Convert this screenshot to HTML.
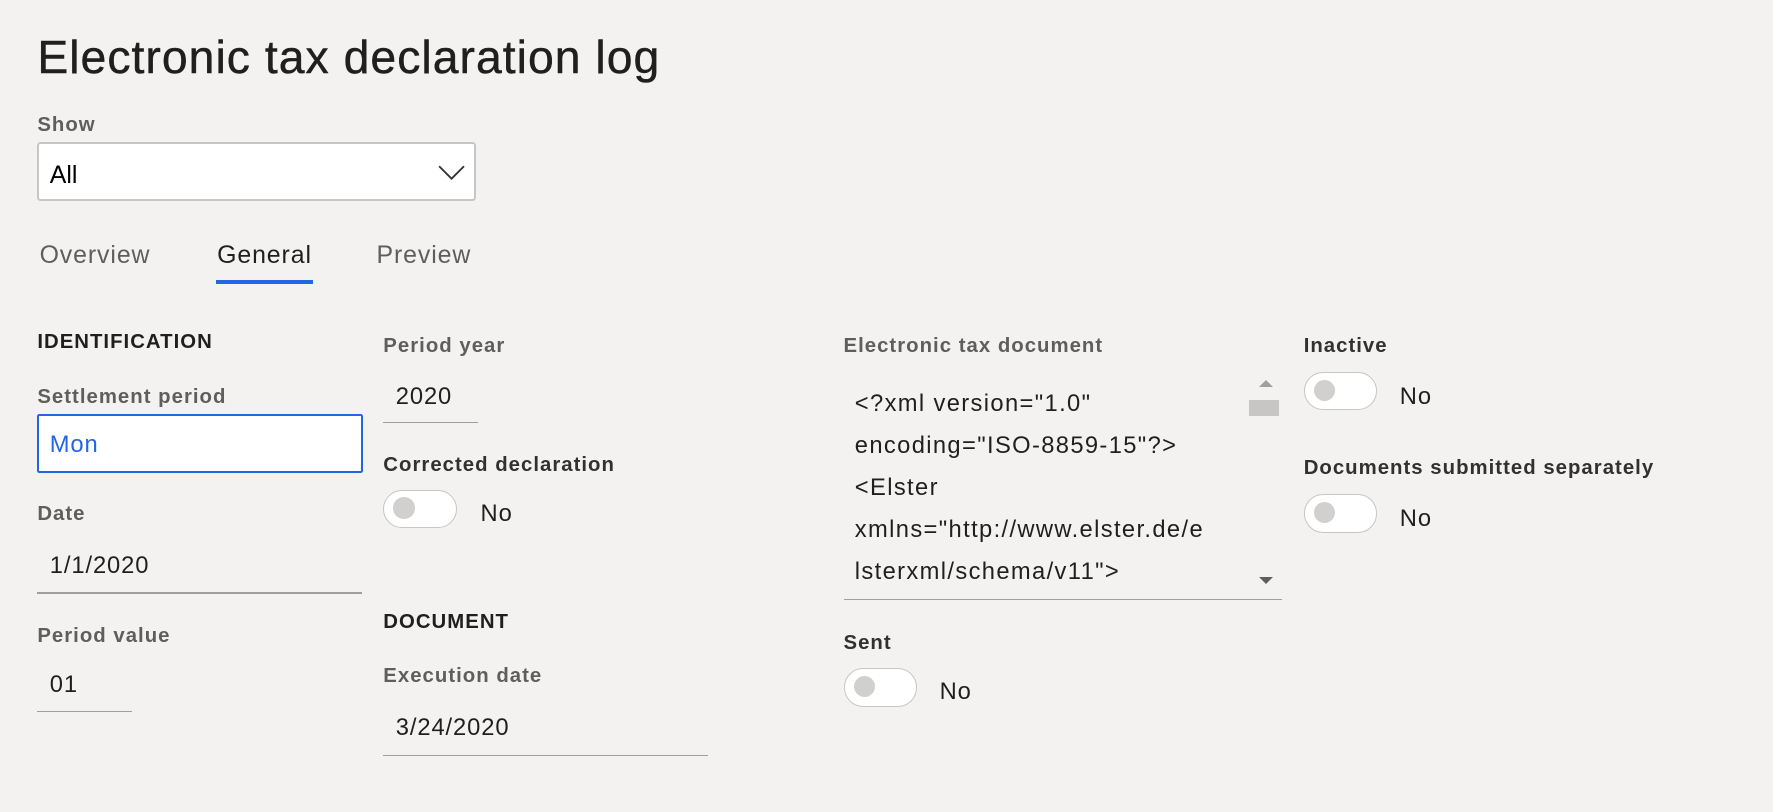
<!DOCTYPE html>
<html><head><meta charset="utf-8"><style>
html,body{margin:0;padding:0;background:#f3f2f1;overflow:hidden;}
body{width:1773px;height:812px;}
#w{position:relative;width:1568px;height:718px;zoom:1.1307;font-family:"Liberation Sans",sans-serif;}
.t{position:absolute;white-space:nowrap;line-height:1;}
.lbl{font-size:18px;font-weight:bold;color:#605e5c;letter-spacing:0.9px;margin-top:2px;}
.dk{color:#323130;}
.val{font-size:21px;color:#201f1e;letter-spacing:0.8px;}
.ul{position:absolute;height:1px;background:#a19f9d;}
.tg{position:absolute;width:62px;height:32px;border:1.5px solid #c8c6c4;border-radius:17px;background:#fff;box-sizing:border-box;}
.tg:after{content:"";position:absolute;left:8px;top:6px;width:19px;height:19px;border-radius:50%;background:#d2d0ce;}
</style></head><body><div id="w">
<div class="t" style="left:33px;top:30px;font-size:41px;color:#201f1e;letter-spacing:0.9px;-webkit-text-stroke:0.4px #201f1e;">Electronic tax declaration log</div>
<div class="t lbl" style="left:33px;top:100px;">Show</div>
<div style="position:absolute;left:33px;top:126px;width:388px;height:52px;border:2px solid #c8c6c4;border-radius:3px;background:#fff;box-sizing:border-box;"></div>
<div class="t" style="left:44px;top:144px;font-size:22px;color:#000;">All</div>
<svg style="position:absolute;left:387px;top:145px" width="24" height="16"><path d="M1 2 L12 13 L23 2" fill="none" stroke="#323130" stroke-width="1.6"/></svg>
<div class="t" style="left:35px;top:215px;font-size:22px;color:#605e5c;letter-spacing:0.8px;">Overview</div>
<div class="t" style="left:192px;top:215px;font-size:22px;color:#201f1e;letter-spacing:0.8px;">General</div>
<div class="t" style="left:333px;top:215px;font-size:22px;color:#605e5c;letter-spacing:0.8px;">Preview</div>
<div style="position:absolute;left:191px;top:248px;width:86px;height:3px;background:#2266e3;"></div>

<div class="t" style="left:33px;top:294px;font-size:18px;font-weight:bold;color:#201f1e;letter-spacing:0.9px;">IDENTIFICATION</div>
<div class="t lbl" style="left:33px;top:340px;">Settlement period</div>
<div style="position:absolute;left:33px;top:366px;width:288px;height:52px;border:2px solid #2266e3;border-radius:2px;background:#fff;box-sizing:border-box;"></div>
<div class="t" style="left:44px;top:384px;font-size:21px;color:#2266e3;letter-spacing:0.8px;">Mon</div>
<div class="t lbl" style="left:33px;top:444px;">Date</div>
<div class="t val" style="left:44px;top:491px;">1/1/2020</div>
<div class="ul" style="left:33px;top:524px;width:287px;"></div>
<div class="t lbl" style="left:33px;top:552px;">Period value</div>
<div class="t val" style="left:44px;top:596px;">01</div>
<div class="ul" style="left:33px;top:629px;width:84px;"></div>

<div class="t lbl" style="left:339px;top:295px;">Period year</div>
<div class="t val" style="left:350px;top:341px;">2020</div>
<div class="ul" style="left:339px;top:373px;width:84px;"></div>
<div class="t lbl dk" style="left:339px;top:400px;">Corrected declaration</div>
<div class="tg" style="left:339px;top:433px;width:65px;height:34px;"></div>
<div class="t val" style="left:425px;top:445px;">No</div>
<div class="t" style="left:339px;top:541px;font-size:18px;font-weight:bold;color:#201f1e;letter-spacing:0.9px;">DOCUMENT</div>
<div class="t lbl" style="left:339px;top:587px;">Execution date</div>
<div class="t val" style="left:350px;top:634px;">3/24/2020</div>
<div class="ul" style="left:339px;top:668px;width:287px;"></div>

<div class="t lbl" style="left:746px;top:295px;">Electronic tax document</div>
<div style="position:absolute;left:746px;top:330px;width:388px;height:200px;border-bottom:1.5px solid #a19f9d;overflow:hidden;">
<div style="position:absolute;left:10px;top:10px;font-size:21px;line-height:37px;color:#201f1e;white-space:nowrap;letter-spacing:1.2px;">&lt;?xml version="1.0"<br>encoding="ISO-8859-15"?&gt;<br>&lt;Elster<br>xmlns="http://www.elster.de/e<br>lsterxml/schema/v11"&gt;<br>&lt;TransferHeader</div>
<div style="position:absolute;right:0;top:0;width:30px;height:200px;background:#f3f2f1;"></div>
<div style="position:absolute;right:8px;top:6px;width:0;height:0;border-left:7px solid transparent;border-right:7px solid transparent;border-bottom:7px solid #a19f9d;"></div>
<div style="position:absolute;right:3px;top:24px;width:26px;height:14px;background:#c8c6c4;"></div>
<div style="position:absolute;right:8px;top:180px;width:0;height:0;border-left:7px solid transparent;border-right:7px solid transparent;border-top:7px solid #605e5c;"></div>
</div>
<div class="t lbl dk" style="left:746px;top:558px;">Sent</div>
<div class="tg" style="left:746px;top:591px;width:65px;height:34px;"></div>
<div class="t val" style="left:831px;top:602px;">No</div>

<div class="t lbl dk" style="left:1153px;top:295px;">Inactive</div>
<div class="tg" style="left:1153px;top:329px;width:65px;height:34px;"></div>
<div class="t val" style="left:1238px;top:341px;">No</div>
<div class="t lbl dk" style="left:1153px;top:403px;">Documents submitted separately</div>
<div class="tg" style="left:1153px;top:437px;width:65px;height:34px;"></div>
<div class="t val" style="left:1238px;top:449px;">No</div>
</div></body></html>
